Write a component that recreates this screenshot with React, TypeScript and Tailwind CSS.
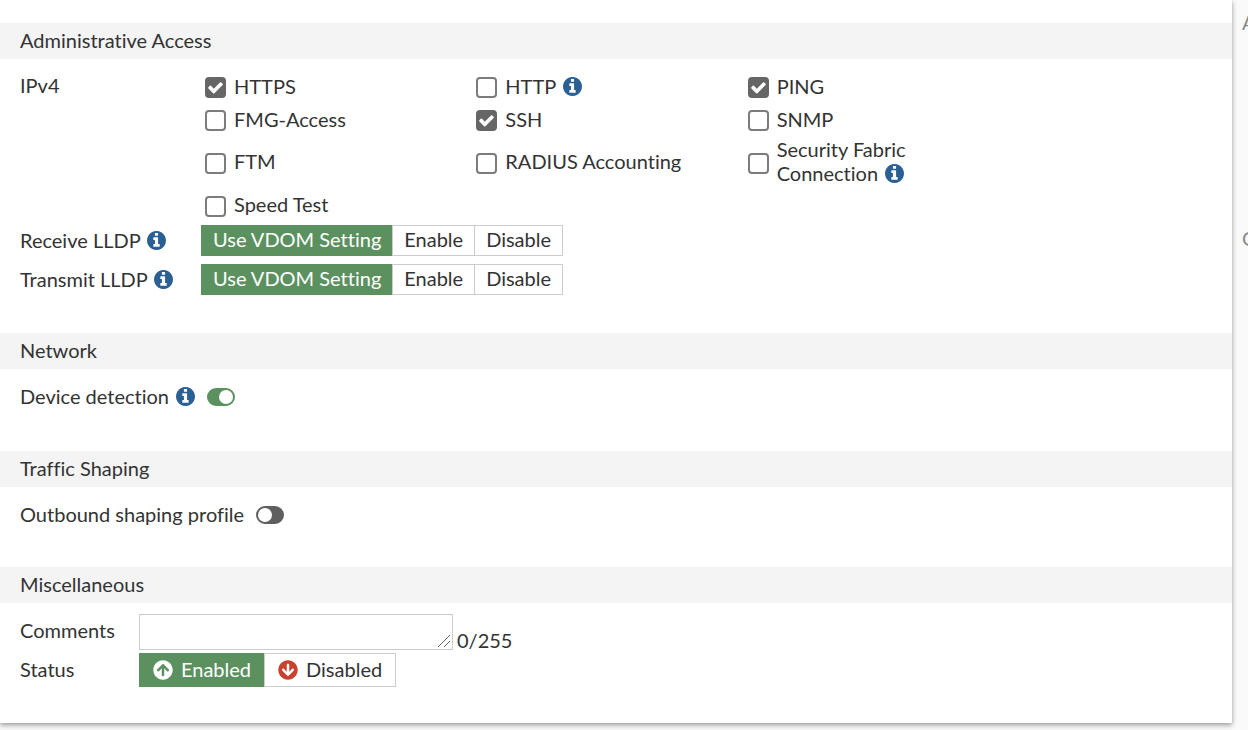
import React, { useState } from 'react';
import { FaArrowCircleDown, FaArrowCircleUp } from 'react-icons/fa';

interface AccessOption {
  id: string;
  label: string;
  checked?: boolean;
  info?: boolean;
}

const ACCESS_OPTIONS: AccessOption[] = [
  { id: 'https', label: 'HTTPS', checked: true },
  { id: 'http', label: 'HTTP', info: true },
  { id: 'ping', label: 'PING', checked: true },
  { id: 'fmg', label: 'FMG-Access' },
  { id: 'ssh', label: 'SSH', checked: true },
  { id: 'snmp', label: 'SNMP' },
  { id: 'ftm', label: 'FTM' },
  { id: 'radius', label: 'RADIUS Accounting' },
  { id: 'fabric', label: 'Security Fabric Connection', info: true },
  { id: 'speed', label: 'Speed Test' },
];

const LLDP_CHOICES = ['Use VDOM Setting', 'Enable', 'Disable'];

const InfoIcon: React.FC = () => (
  <svg
    viewBox="0 128 1536 1536"
    fill="currentColor"
    aria-hidden="true"
    className="ml-[2px] inline-block size-[19px] align-[-2px] text-[#2b6095]"
  >
    <path d="M1024 1376v-160q0-14-9-23t-23-9h-96v-512q0-14-9-23t-23-9h-320q-14 0-23 9t-9 23v160q0 14 9 23t23 9h96v320h-96q-14 0-23 9t-9 23v160q0 14 9 23t23 9h448q14 0 23-9t9-23zm-128-896v-160q0-14-9-23t-23-9h-192q-14 0-23 9t-9 23v160q0 14 9 23t23 9h192q14 0 23-9t9-23zm640 416q0 209-103 385.5t-279.5 279.5-385.5 103-385.5-103-279.5-279.5-103-385.5 103-385.5 279.5-279.5 385.5-103 385.5 103 279.5 279.5 103 385.5z" />
  </svg>
);

const SectionTitle: React.FC<{ children: React.ReactNode }> = ({ children }) => (
  <h2 className="flex h-9 items-center bg-[#f4f4f4] px-5 pb-[2px]">{children}</h2>
);

const AccessCheckbox: React.FC<{ option: AccessOption }> = ({ option }) => (
  <div className="flex items-center gap-2">
    <span className="grid size-[21px] shrink-0 place-items-center">
      <input
        id={option.id}
        type="checkbox"
        defaultChecked={option.checked}
        className="peer col-start-1 row-start-1 size-[21px] appearance-none rounded-sm border-2 border-[#7c7c7c] bg-white checked:border-[#666] checked:bg-[#666]"
      />
      <svg
        viewBox="0 0 1792 1792"
        fill="currentColor"
        aria-hidden="true"
        className="pointer-events-none invisible col-start-1 row-start-1 size-[17px] text-white peer-checked:visible"
      >
        <path d="M1671 566q0 40-28 68l-724 724-136 136q-28 28-68 28t-68-28l-136-136-362-362q-28-28-28-68t28-68l136-136q28-28 68-28t68 28l294 295 656-657q28-28 68-28t68 28l136 136q28 28 28 68z" />
      </svg>
    </span>
    <label htmlFor={option.id} className="max-w-[200px] min-w-0 pb-1 has-[svg]:max-w-[160px]">
      {option.label}
      {option.info && <> <InfoIcon /></>}
    </label>
  </div>
);

const LldpRow: React.FC<{ label: string }> = ({ label }) => {
  const [selected, setSelected] = useState(LLDP_CHOICES[0]);

  return (
    <div className="flex items-center">
      <span className="w-[181px] pb-[2px]">{label} <InfoIcon /></span>
      <div role="group" aria-label={label} className="flex">
        {LLDP_CHOICES.map((choice) => (
          <button
            key={choice}
            type="button"
            onClick={() => setSelected(choice)}
            className={`-ml-px flex h-[31px] items-center border px-[11px] pb-[3px] first:ml-0 ${selected === choice ? 'border-[#5b915f] bg-[#5b915f] text-white' : 'border-[#ccc] bg-white'}`}
          >
            {choice}
          </button>
        ))}
      </div>
    </div>
  );
};

const Toggle: React.FC<{ id: string; on?: boolean }> = ({ id, on }) => (
  <input
    id={id}
    type="checkbox"
    role="switch"
    defaultChecked={on}
    className="h-[18px] w-7 appearance-none rounded-full border-2 border-[#5f5f5f] bg-[#5f5f5f] before:block before:size-[14px] before:rounded-full before:bg-white checked:border-[#5b915f] checked:bg-[#5b915f] checked:before:ml-[10px]"
  />
);

const App: React.FC = () => {
  const [comments, setComments] = useState('');
  const [enabled, setEnabled] = useState(true);

  return (
    <div className="flex min-h-screen items-start overflow-hidden bg-[#fafafa] font-['Lato',sans-serif] text-[20px] leading-6 text-[#333] [font-variant-ligatures:none]">
      <main className="min-w-0 flex-1 bg-white pt-[23px] pb-9 shadow-[0_2px_5px_0_rgba(0,0,0,0.4)]">
        <section className="pb-[38px]">
          <SectionTitle>Administrative Access</SectionTitle>
          <div className="flex px-5 pt-3">
            <span className="w-[185px] shrink-0 pt-[2px]">IPv4</span>
            <div className="grid w-full max-w-[814px] grid-cols-3 grid-rows-[33px_33px_52px_34px]">
              {ACCESS_OPTIONS.map((option) => (
                <AccessCheckbox key={option.id} option={option} />
              ))}
            </div>
          </div>
          <div className="flex flex-col gap-2 px-5 pt-[2px]">
            <LldpRow label="Receive LLDP" />
            <LldpRow label="Transmit LLDP" />
          </div>
        </section>

        <section className="pb-[41px]">
          <SectionTitle>Network</SectionTitle>
          <div className="flex items-center gap-3 px-5 pt-[15px]">
            <label htmlFor="detection" className="pb-[2px]">Device detection <InfoIcon /></label>
            <Toggle id="detection" on />
          </div>
        </section>

        <section className="pb-[39px]">
          <SectionTitle>Traffic Shaping</SectionTitle>
          <div className="flex items-center gap-3 px-5 pt-[15px]">
            <label htmlFor="shaping" className="pb-[2px]">Outbound shaping profile</label>
            <Toggle id="shaping" />
          </div>
        </section>

        <section>
          <SectionTitle>Miscellaneous</SectionTitle>
          <div className="flex items-end gap-1 px-5 pt-[11px]">
            <label htmlFor="comments" className="w-[115px] self-center pb-1">Comments</label>
            <div className="relative">
              <textarea
                id="comments"
                rows={1}
                maxLength={255}
                value={comments}
                onChange={(e) => setComments(e.target.value)}
                className="block h-9 w-[314px] resize-none border border-[#ccc] bg-white px-2 py-1"
              />
              <svg
                viewBox="0 0 14 14"
                fill="none"
                stroke="#666"
                aria-hidden="true"
                className="pointer-events-none absolute right-[2px] bottom-[2px] size-[14px]"
              >
                <path d="M1 13 13 1M7 13l6-6" />
              </svg>
            </div>
            <span className="leading-5">{comments.length}/255</span>
          </div>
          <div className="flex items-center px-5 pt-[3px]">
            <span className="w-[119px] pb-[2px]">Status</span>
            <div role="group" aria-label="Status" className="flex">
              <button
                type="button"
                onClick={() => setEnabled(true)}
                className={`flex h-[34px] items-center gap-2 border px-[13px] ${enabled ? 'border-[#5b915f] bg-[#5b915f] text-white' : 'border-[#ccc] bg-white'}`}
              >
                <FaArrowCircleUp className="size-5" />
                <span className="pb-[2px]">Enabled</span>
              </button>
              <button
                type="button"
                onClick={() => setEnabled(false)}
                className={`-ml-px flex h-[34px] items-center gap-2 border px-[13px] ${enabled ? 'border-[#ccc] bg-white' : 'border-[#5b915f] bg-[#5b915f] text-white'}`}
              >
                <FaArrowCircleDown className="size-5 text-[#c9412f]" />
                <span className="pb-[2px]">Disabled</span>
              </button>
            </div>
          </div>
        </section>
      </main>

      <aside className="w-4 shrink-0 pt-[10px] pl-[10px] text-[#888]">
        <p>A</p>
        <p className="pt-48">O</p>
      </aside>
    </div>
  );
};

export default App;
